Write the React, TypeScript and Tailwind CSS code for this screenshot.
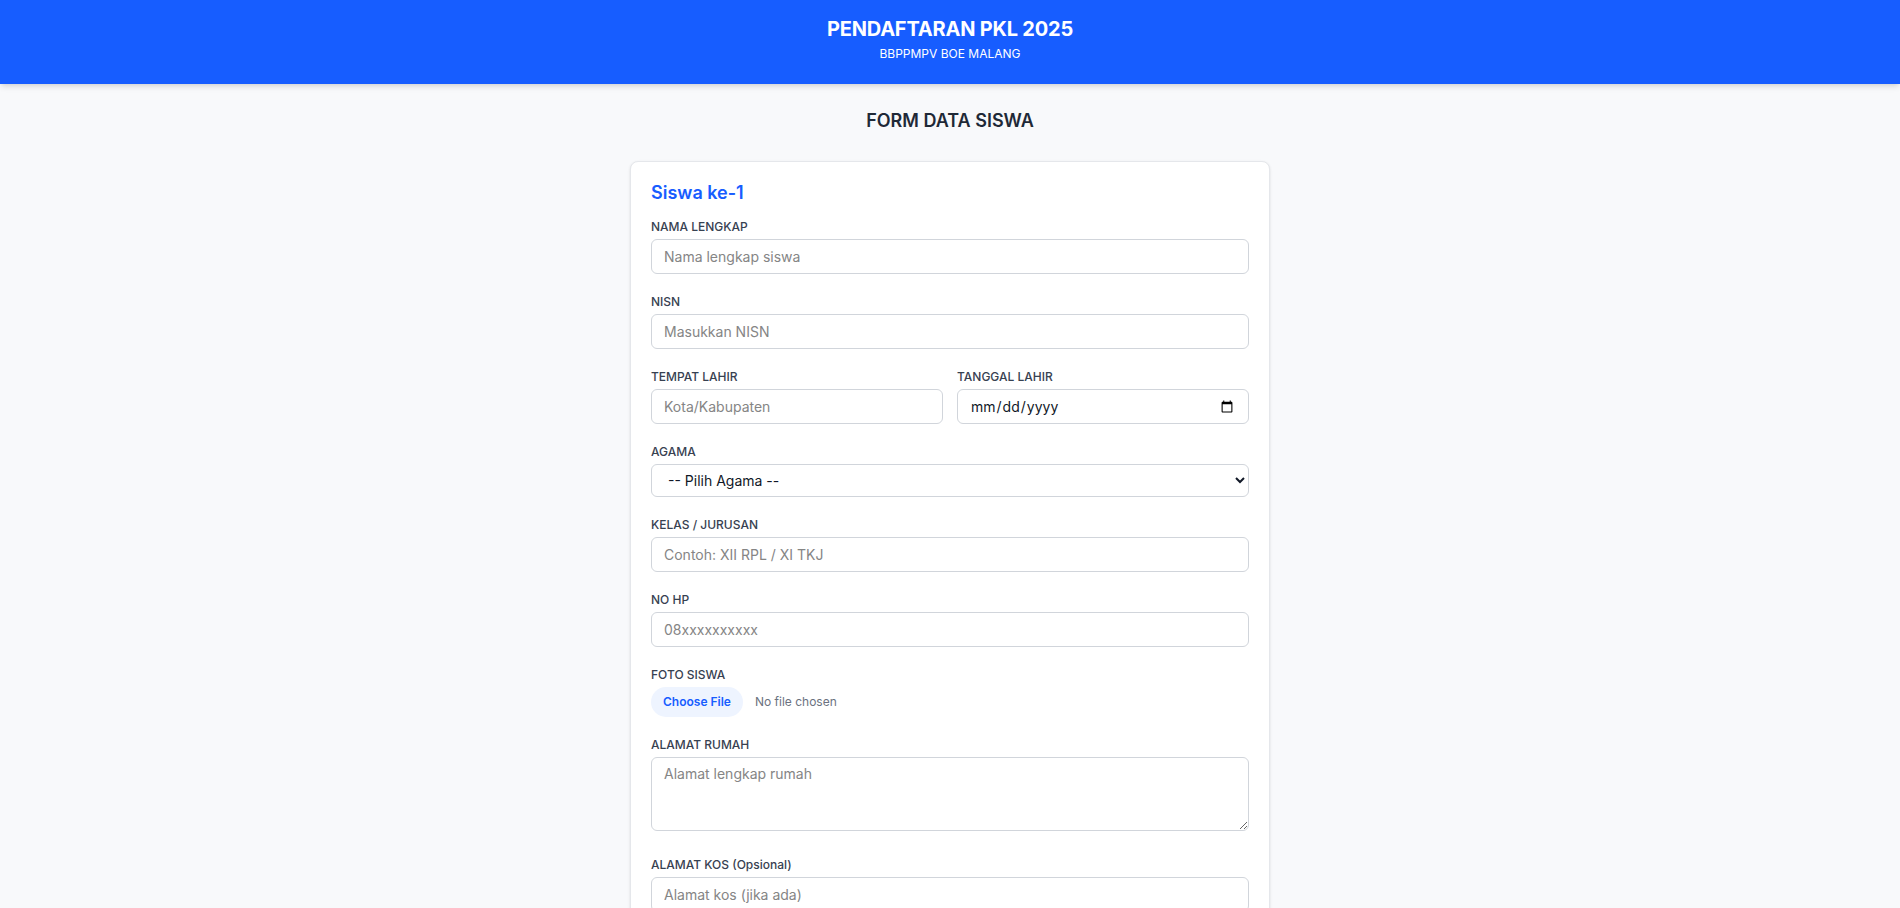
import React from 'react';

const baseCls =
  'w-full px-3 py-1.5 text-sm border border-[#d1d5db] rounded-md bg-white text-[#111827] placeholder:text-[#858585] focus:outline-none focus:ring-2 focus:ring-blue-500';
const inputCls = baseCls + ' leading-[21px]';
const areaCls = baseCls + ' leading-5';

function Field({ label, children }: { label: React.ReactNode; children: React.ReactNode }) {
  return (
    <div>
      <label className="block text-xs leading-4 font-medium text-[#374151] mb-1">{label}</label>
      {children}
    </div>
  );
}

export default function App() {
  return (
    <div className="min-h-screen bg-[#f8f9fb] font-['Inter',sans-serif] text-[#1f2937]">
      {/* Header */}
      <header className="bg-[#175dff] text-white text-center pt-[15px] pb-[22px] shadow-md">
        <h1 className="text-xl leading-7 font-bold tracking-[-0.01em]">PENDAFTARAN PKL 2025</h1>
        <p className="text-xs leading-4 mt-[3px]">BBPPMPV BOE MALANG</p>
      </header>

      <main className="px-4 pt-[23px] pb-10">
        <h2 className="text-lg leading-7 font-semibold text-center text-[#1f2937] mb-[26px]">FORM DATA SISWA</h2>

        <div className="w-[640px] mx-auto bg-white border border-[#e5e7eb] rounded-lg shadow-sm px-5 pt-[17px] pb-6">
          <h3 className="text-lg leading-7 font-semibold text-[#175dff] mb-3">Siswa ke-1</h3>

          <div className="space-y-5">
            <Field label="NAMA LENGKAP">
              <input type="text" placeholder="Nama lengkap siswa" className={inputCls} />
            </Field>

            <Field label="NISN">
              <input type="text" placeholder="Masukkan NISN" className={inputCls} />
            </Field>

            <div className="grid grid-cols-2 gap-3.5">
              <Field label="TEMPAT LAHIR">
                <input type="text" placeholder="Kota/Kabupaten" className={inputCls} />
              </Field>
              <Field label="TANGGAL LAHIR">
                <input type="date" className={inputCls} />
              </Field>
            </div>

            <Field label="AGAMA">
              <select className={inputCls} defaultValue="">
                <option value="">-- Pilih Agama --</option>
                <option>Islam</option>
                <option>Kristen</option>
                <option>Katolik</option>
                <option>Hindu</option>
                <option>Buddha</option>
                <option>Konghucu</option>
              </select>
            </Field>

            <Field label="KELAS / JURUSAN">
              <input type="text" placeholder="Contoh: XII RPL / XI TKJ" className={inputCls} />
            </Field>

            <Field label="NO HP">
              <input type="tel" placeholder="08xxxxxxxxxx" className={inputCls} />
            </Field>

            <Field label="FOTO SISWA">
              <input
                type="file"
                accept="image/*"
                className="block text-xs text-[#6b7280] file:mr-3 file:py-[7px] file:px-3 file:rounded-full file:border-0 file:text-xs file:font-semibold file:bg-[#eef4ff] file:text-[#175dff]"
              />
            </Field>

            <Field label="ALAMAT RUMAH">
              <textarea rows={3} placeholder="Alamat lengkap rumah" className={areaCls} />
            </Field>

            <Field label="ALAMAT KOS (Opsional)">
              <input type="text" placeholder="Alamat kos (jika ada)" className={inputCls} />
            </Field>
          </div>
        </div>
      </main>
    </div>
  );
}
